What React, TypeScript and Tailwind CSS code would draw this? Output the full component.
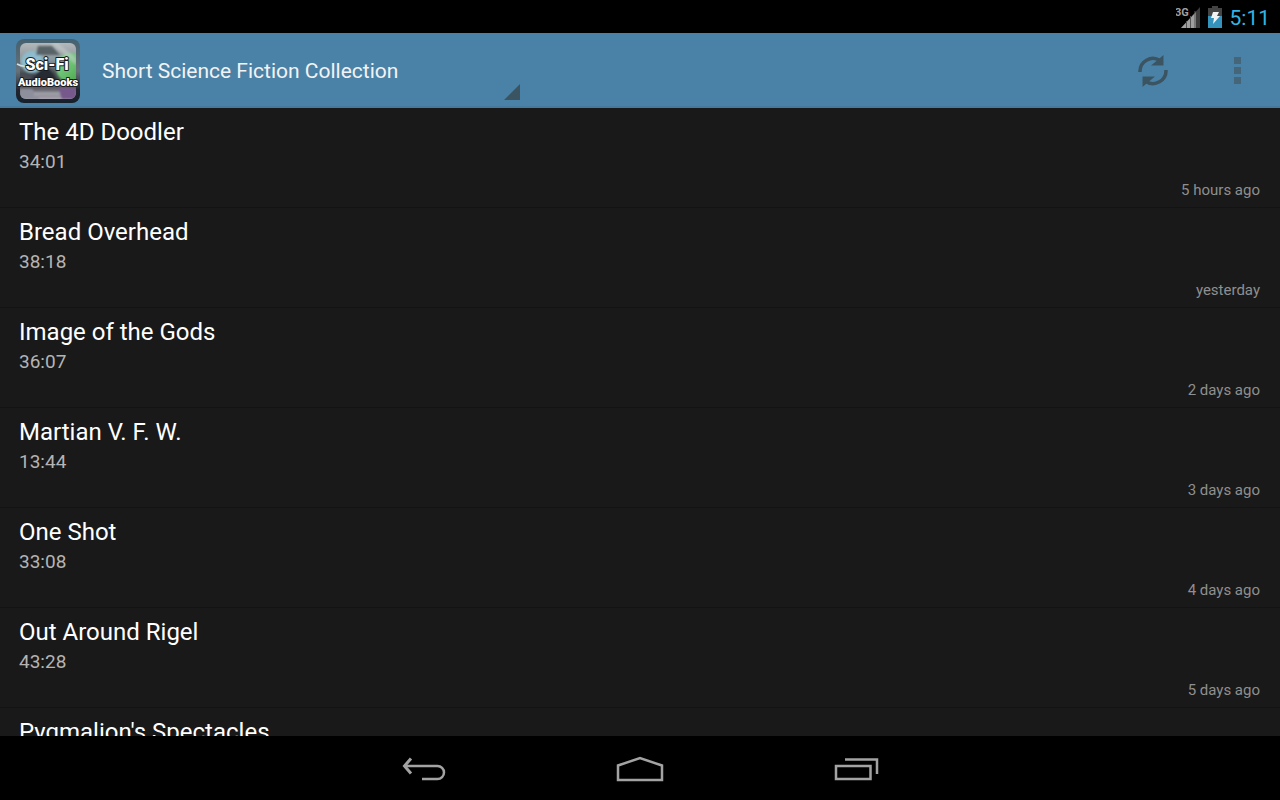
import { useState } from "react";

type Episode = {
  title: string;
  duration: string;
  published: string;
};

const COLLECTIONS = ["Short Science Fiction Collection"];

const EPISODES: Episode[] = [
  { title: "The 4D Doodler", duration: "34:01", published: "5 hours ago" },
  { title: "Bread Overhead", duration: "38:18", published: "yesterday" },
  { title: "Image of the Gods", duration: "36:07", published: "2 days ago" },
  { title: "Martian V. F. W.", duration: "13:44", published: "3 days ago" },
  { title: "One Shot", duration: "33:08", published: "4 days ago" },
  { title: "Out Around Rigel", duration: "43:28", published: "5 days ago" },
  { title: "Pygmalion's Spectacles", duration: "", published: "" },
];

function SignalIcon() {
  return (
    <svg width="24" height="24" viewBox="0 0 24 24" role="img" aria-label="3G signal">
      <path d="M5 23 24 2v21z" fill="#3c3c3c" />
      <path d="M5 23 20 7v16z" fill="#a0a0a0" />
      <path d="M10.500 16v7M14.500 11v12M19 6v17" stroke="#555" />
      <text x="-1" y="11" fill="#a0a0a0" fontSize="11" fontWeight="700" fontFamily="Roboto, sans-serif">
        3G
      </text>
    </svg>
  );
}

function BatteryIcon() {
  return (
    <svg width="14" height="22" viewBox="0 0 14 22" role="img" aria-label="Battery charging">
      <path d="M4 0h6v2h4v20H0V2h4z" fill="#444" />
      <path d="M0 10h14v12H0z" fill="#3393bd" />
      <path d="M5 6h6l-2 4h3l-7 8 1-6H3z" fill="#f2f2f2" />
    </svg>
  );
}

function StatusBar() {
  return (
    <header className="flex h-[33px] shrink-0 items-center justify-end bg-black pr-2.5">
      <SignalIcon />
      <span className="mr-2 ml-2">
        <BatteryIcon />
      </span>
      <span className="pt-0.5 text-[21px] leading-8 text-[#33b5e5]">5:11</span>
    </header>
  );
}

function AppLogo() {
  return (
    <svg width="64" height="64" viewBox="0 0 64 64" className="shrink-0" role="img" aria-label="Sci-Fi AudioBooks">
      <defs>
        <linearGradient id="frame" x1="0" y1="0" x2="0" y2="1">
          <stop offset="0" stopColor="#44606f" />
          <stop offset="0.5" stopColor="#66727a" />
          <stop offset="0.8" stopColor="#22252f" />
          <stop offset="1" stopColor="#15202b" />
        </linearGradient>
        <linearGradient id="scene" x1="0" y1="0" x2="0" y2="1">
          <stop offset="0" stopColor="#b3b7ba" />
          <stop offset="0.3" stopColor="#8b979c" />
          <stop offset="0.55" stopColor="#454b50" />
          <stop offset="0.75" stopColor="#4a4a52" />
          <stop offset="1" stopColor="#a9a4b0" />
        </linearGradient>
        <linearGradient id="planet" x1="0" y1="0" x2="1" y2="1">
          <stop offset="0" stopColor="#8fdf9d" />
          <stop offset="1" stopColor="#3f9c3c" />
        </linearGradient>
        <clipPath id="inner">
          <rect x="4" y="4" width="56" height="56" rx="6" />
        </clipPath>
        <filter id="soft">
          <feGaussianBlur stdDeviation="1.200" />
        </filter>
      </defs>
      <rect width="64" height="64" rx="8" fill="url(#frame)" />
      <g clipPath="url(#inner)">
        <rect x="4" y="4" width="56" height="56" fill="url(#scene)" />
        <g filter="url(#soft)">
          <circle cx="16" cy="23" r="11" fill="#8dbccd" />
          <circle cx="55" cy="29" r="15" fill="url(#planet)" />
          <path d="M14 42 30 25l12 17z" fill="#252a30" />
          <path d="M22 7h14l8 9H20z" fill="#596468" />
          <path d="M35 4h7l18 15v7z" fill="#c9d0cf" opacity="0.500" />
          <path d="M4 50h12l8 10H4z" fill="#8d8f9c" />
          <path d="M42 49h18v11H46z" fill="#77588c" />
          <path d="M18 53h26v4H18z" fill="#9b9ca5" />
        </g>
      </g>
      <path d="M1 25q5 3 10 2" fill="none" stroke="#cbdfe5" strokeWidth="1.500" />
      <g
        fill="#fff"
        stroke="#17191c"
        strokeWidth="2"
        paintOrder="stroke"
        strokeLinejoin="round"
        textAnchor="middle"
        fontWeight="900"
        fontFamily="Roboto, sans-serif"
      >
        <text x="31" y="31" fontSize="16">
          Sci-Fi
        </text>
        <text x="32" y="47" fontSize="11">
          AudioBooks
        </text>
      </g>
    </svg>
  );
}

function RefreshIcon() {
  return (
    <svg width="30" height="32" viewBox="0 0 30 32" aria-hidden="true">
      <g fill="none" stroke="#3b5462" strokeWidth="3.500">
        <path d="M2 17A13 13 0 0 1 22 5.500" />
        <path d="M28 15A13 13 0 0 1 8 26.500" />
      </g>
      <path d="M25.500 0v10.500H13z" fill="#3b5462" />
      <path d="M4.500 32V21.500H17z" fill="#3b5462" />
    </svg>
  );
}

function ActionBar() {
  const [collection, setCollection] = useState(COLLECTIONS[0]);

  return (
    <div className="flex h-[75px] shrink-0 items-center bg-[#4a82a7] pl-4 shadow-[inset_0_-2px_#457a9e]">
      <AppLogo />
      <div className="relative ml-3.5 h-full w-[426px]">
        <select
          aria-label="Collection"
          value={collection}
          onChange={(e) => setCollection(e.target.value)}
          className="h-full w-full appearance-none bg-transparent px-2 pt-0.5 text-[21px] text-[#f3f3f3]"
        >
          {COLLECTIONS.map((c) => (
            <option key={c}>{c}</option>
          ))}
        </select>
        <svg width="16" height="16" viewBox="0 0 16 16" className="pointer-events-none absolute right-0 bottom-2" aria-hidden="true">
          <path d="M16 0v16H0z" fill="#3b5462" />
        </svg>
      </div>
      <span className="flex-1" />
      <button type="button" aria-label="Refresh" className="grid h-full w-[85px] place-items-center">
        <RefreshIcon />
      </button>
      <button type="button" aria-label="More options" className="grid h-full w-[85px] place-items-center">
        <svg width="7" height="27" viewBox="0 0 7 27" aria-hidden="true">
          <path d="M0 0h7v7H0zM0 10h7v7H0zM0 20h7v7H0z" fill="#456678" />
        </svg>
      </button>
    </div>
  );
}

function EpisodeRow({ episode }: { episode: Episode }) {
  return (
    <li className="flex h-[100px] flex-col border-b border-[#101413] pt-2 pr-5 pl-[19px]">
      <h2 className="text-[24px] leading-8 text-white">{episode.title}</h2>
      <p className="text-[19px] leading-7 text-[#b4b4b4]">{episode.duration}</p>
      <p className="text-right text-[15px] leading-7 text-[#8f8f8f]">{episode.published}</p>
    </li>
  );
}

function NavBar() {
  return (
    <nav className="flex h-16 shrink-0 items-center justify-center gap-14 bg-black pt-0.5">
      <button type="button" aria-label="Back" className="grid h-full w-40 place-items-center">
        <svg width="44" height="26" viewBox="0 0 44 26" fill="none" stroke="#a3a3a3" strokeWidth="3" aria-hidden="true">
          <path d="M2 10h33.500a6.500 6.500 0 0 1 0 13H20" strokeWidth="2.500" />
          <path d="M9 2.500 2.500 10 9 17.500" />
        </svg>
      </button>
      <button type="button" aria-label="Home" className="grid h-full w-40 place-items-center">
        <svg width="48" height="26" viewBox="0 0 48 26" fill="none" stroke="#a3a3a3" strokeWidth="2.500" aria-hidden="true">
          <path d="M2 24V9.500L24 2l22 7.500V24z" />
        </svg>
      </button>
      <button type="button" aria-label="Recent apps" className="grid h-full w-40 place-items-center">
        <svg width="46" height="26" viewBox="0 0 46 26" fill="none" stroke="#a3a3a3" strokeWidth="2.500" aria-hidden="true">
          <path d="M3 10h34.500v13H3zM12 3.500h32V18" />
        </svg>
      </button>
    </nav>
  );
}

export default function App() {
  return (
    <div className="flex h-screen flex-col bg-[#191919] font-[Roboto,sans-serif]">
      <StatusBar />
      <ActionBar />
      <main className="min-h-0 flex-1 overflow-hidden">
        <ul>
          {EPISODES.map((episode) => (
            <EpisodeRow key={episode.title} episode={episode} />
          ))}
        </ul>
      </main>
      <NavBar />
    </div>
  );
}
